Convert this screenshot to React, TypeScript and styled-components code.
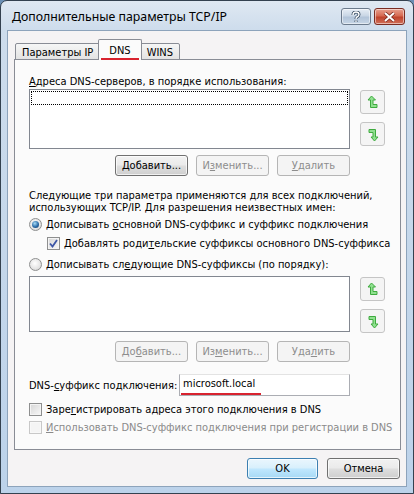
import React from 'react';
import styled, { createGlobalStyle } from 'styled-components';

const GlobalStyle = createGlobalStyle`
  * { margin: 0; padding: 0; box-sizing: border-box; }
  html, body { width: 414px; height: 494px; overflow: hidden; background: #6b8fb5; }
  body { font-family: 'DejaVu Sans Condensed', 'DejaVu Sans', sans-serif; font-size: 11px; color: #000; }
`;

const Window = styled.div`
  width: 414px;
  height: 494px;
  border: 1px solid #34414f;
  border-radius: 7px 7px 0 0;
  background: linear-gradient(180deg, #dfe8f2 0%, #cddcec 30px, #bcd2ea 100%);
  display: flex;
  flex-direction: column;
  padding: 0 6px 6px 6px;
`;

const TitleBar = styled.div`
  height: 29px;
  display: flex;
  align-items: center;
  padding: 0 2px 0 5px;
`;

const Title = styled.div`
  flex: 1;
  font-family: 'Noto Sans', 'Open Sans', sans-serif;
  font-size: 12.3px;
  color: #000;
  padding-top: 2px;
`;

const CaptionButton = styled.div<{ $close?: boolean }>`
  width: ${p => (p.$close ? 31 : 30)}px;
  height: 17px;
  margin-left: ${p => (p.$close ? 3 : 0)}px;
  margin-top: 2px;
  border: 1px solid ${p => (p.$close ? '#7a2c22' : '#6b7a8c')};
  border-radius: 3px;
  display: flex;
  align-items: center;
  justify-content: center;
  background: ${p =>
    p.$close
      ? 'linear-gradient(180deg, #e8a08f 0%, #d66a52 45%, #c0432c 55%, #d0705a 100%)'
      : 'linear-gradient(180deg, #e6edf5 0%, #c9d6e5 45%, #b2c4d9 55%, #c7d6e6 100%)'};
  box-shadow: inset 0 0 0 1px rgba(255, 255, 255, 0.5);
`;

const Client = styled.div`
  flex: 1;
  background: #f5f3f4;
  border: 1px solid #8da3bb;
  display: flex;
  flex-direction: column;
  padding: 8px 5px 0 6px;
`;

const TabRow = styled.div`
  display: flex;
  align-items: flex-end;
  height: 21px;
  padding-left: 1px;
  position: relative;
  z-index: 1;
`;

const Tab = styled.div<{ $active?: boolean; $mark?: boolean }>`
  position: relative;
  height: ${p => (p.$active ? 21 : 17)}px;
  padding: 0 ${p => (p.$active ? 10 : 6)}px;
  margin: 0 ${p => (p.$active ? -2 : 0)}px;
  z-index: ${p => (p.$active ? 2 : 1)};
  border: 1px solid #898c95;
  border-bottom: ${p => (p.$active ? 'none' : '1px solid #898c95')};
  background: ${p => (p.$active ? '#fbfbfb' : 'linear-gradient(180deg, #f6f6f6, #e3e3e3)')};
  display: flex;
  align-items: center;
  padding-top: ${p => (p.$active ? 0 : 1)}px;
  border-radius: 2px 2px 0 0;

  &::after {
    content: '';
    display: ${p => (p.$mark ? 'block' : 'none')};
    position: absolute;
    left: 2px;
    right: 2px;
    bottom: 0;
    height: 2px;
    background: #d8232f;
  }
`;

const Panel = styled.div`
  height: 391px;
  margin-top: -1px;
  border: 1px solid #898c95;
  background: #fbfbfb;
  padding: 15px 14px 0 14px;
  display: flex;
  flex-direction: column;
`;

const Label = styled.div<{ $dim?: boolean }>`
  line-height: 13px;
  color: ${p => (p.$dim ? '#8a8a8a' : '#000')};
  white-space: nowrap;
`;

const ListRow = styled.div<{ $top: number }>`
  display: flex;
  gap: 10px;
  margin-top: ${p => p.$top}px;
`;

const ListBox = styled.div<{ $h: number }>`
  width: 321px;
  height: ${p => p.$h}px;
  border: 1px solid #828790;
  background: #fff;
  padding: 1px;
`;

const FocusRow = styled.div`
  height: 14px;
  border: 1px dotted #000;
`;

const ArrowCol = styled.div<{ $gap: number }>`
  display: flex;
  flex-direction: column;
  gap: ${p => p.$gap}px;
  padding-top: 1px;
`;

const ArrowButton = styled.div`
  width: 25px;
  height: 24px;
  border: 1px solid #c5c5c5;
  border-radius: 3px;
  background: #f4f4f4;
  display: flex;
  align-items: center;
  justify-content: center;
`;

const ButtonRow = styled.div<{ $top: number }>`
  width: 321px;
  display: flex;
  justify-content: flex-end;
  gap: 8px;
  margin-top: ${p => p.$top}px;
`;

const Button = styled.div<{ $disabled?: boolean; $default?: boolean; $w?: number }>`
  width: ${p => p.$w || 73}px;
  height: 21px;
  border-radius: 3px;
  display: flex;
  align-items: center;
  justify-content: center;
  color: ${p => (p.$disabled ? '#8d8d8d' : '#000')};
  border: 1px solid ${p => (p.$disabled ? '#b5b5b5' : p.$default ? '#3c7fb1' : '#707070')};
  background: ${p =>
    p.$disabled
      ? '#f4f4f4'
      : p.$default
      ? 'linear-gradient(180deg, #eaf6fd 0%, #d9f0fc 45%, #bee6fd 55%, #a7d9f5 100%)'
      : 'linear-gradient(180deg, #f2f2f2 0%, #ebebeb 45%, #dddddd 55%, #cfcfcf 100%)'};
  box-shadow: ${p => (p.$disabled ? 'none' : 'inset 0 0 0 1px rgba(255,255,255,0.7)')};
`;

const Paragraph = styled.div`
  margin-top: 14px;
  line-height: 12px;
`;

const OptionRow = styled.div<{ $top: number; $indent?: number }>`
  display: flex;
  align-items: center;
  gap: 4px;
  margin-top: ${p => p.$top}px;
  margin-left: ${p => p.$indent || 0}px;
  height: 14px;
`;

const Radio = styled.div<{ $on?: boolean }>`
  width: 13px;
  height: 13px;
  border-radius: 50%;
  border: 1px solid #8e8f8f;
  background: radial-gradient(circle at 45% 40%, #ffffff 0%, #e4e4e4 60%, #c9c9c9 100%);
  display: flex;
  align-items: center;
  justify-content: center;
  flex-shrink: 0;

  &::after {
    content: '';
    display: ${p => (p.$on ? 'block' : 'none')};
    width: 7px;
    height: 7px;
    border-radius: 50%;
    background: radial-gradient(circle at 40% 35%, #a7dcf7 0%, #2b6ca8 55%, #12355f 100%);
  }
`;

const Check = styled.div<{ $dim?: boolean }>`
  width: 13px;
  height: 13px;
  border: 1px solid ${p => (p.$dim ? '#c8c8c8' : '#8e8f8f')};
  background: ${p => (p.$dim ? '#f4f4f4' : 'linear-gradient(135deg, #d6d6d6, #f8f8f8)')};
  box-shadow: inset 0 0 0 1px ${p => (p.$dim ? '#f8f8f8' : '#f4f4f4')};
  display: flex;
  align-items: center;
  justify-content: center;
  flex-shrink: 0;
`;

const SuffixRow = styled.div`
  width: 321px;
  display: flex;
  align-items: center;
  justify-content: space-between;
  margin-top: 12px;
`;

const Input = styled.div`
  position: relative;
  width: 171px;
  height: 22px;
  border: 1px solid #abadb3;
  border-top-color: #e3e3e3;
  background: #fff;
  padding: 2px 0 0 3px;
`;

const Annotation = styled.div`
  position: absolute;
  left: 1px;
  width: 80px;
  bottom: 0;
  height: 2px;
  background: #d8232f;
`;

const Footer = styled.div`
  display: flex;
  justify-content: flex-end;
  gap: 9px;
  padding: 8px 1px 0 0;
`;

const U = styled.span`
  text-decoration: underline;
`;

const UpIcon = () => (
  <svg width="12" height="15" viewBox="0 0 12 15">
    <path d="M4.5 1 L1 5 H3.5 V12.5 H10 V9.5 H6 V5 H8.5 Z" fill="#8fe08f" stroke="#3eaa3e" strokeWidth="1" strokeLinejoin="round" />
  </svg>
);

const DownIcon = () => (
  <svg width="12" height="15" viewBox="0 0 12 15">
    <path d="M2 2.5 H8.5 V10 H11 L7.5 14 L4 10 H6 V5.5 H2 Z" fill="#8fe08f" stroke="#3eaa3e" strokeWidth="1" strokeLinejoin="round" />
  </svg>
);

const CheckMark = () => (
  <svg width="9" height="9" viewBox="0 0 9 9">
    <path d="M1 4.5 L3.5 7.5 L8 1" fill="none" stroke="#3d56a6" strokeWidth="1.8" />
  </svg>
);

const App: React.FC = () => {
  return (
    <Window>
      <GlobalStyle />
      <TitleBar>
        <Title>Дополнительные параметры TCP/IP</Title>
        <CaptionButton>
          <svg width="10" height="12" viewBox="0 0 10 12">
            <path d="M2 4 Q2 1 5 1 Q8 1 8 3.5 Q8 5 6 6 Q5 6.5 5 8 M5 9.5 V11" fill="none" stroke="#34495f" strokeWidth="3" />
            <path d="M2 4 Q2 1 5 1 Q8 1 8 3.5 Q8 5 6 6 Q5 6.5 5 8 M5 9.5 V11" fill="none" stroke="#fff" strokeWidth="1.4" />
          </svg>
        </CaptionButton>
        <CaptionButton $close>
          <svg width="13" height="10" viewBox="0 0 13 10">
            <path d="M2 1 L11 9 M11 1 L2 9" stroke="#7a2c22" strokeWidth="3.6" />
            <path d="M2 1 L11 9 M11 1 L2 9" stroke="#fff" strokeWidth="2" />
          </svg>
        </CaptionButton>
      </TitleBar>
      <Client>
        <TabRow>
          <Tab>Параметры IP</Tab>
          <Tab $active $mark>DNS</Tab>
          <Tab>WINS</Tab>
        </TabRow>
        <Panel>
          <Label><U>А</U>дреса DNS-серверов, в порядке использования:</Label>
          <ListRow $top={1}>
            <ListBox $h={60}>
              <FocusRow />
            </ListBox>
            <ArrowCol $gap={8}>
              <ArrowButton><UpIcon /></ArrowButton>
              <ArrowButton><DownIcon /></ArrowButton>
            </ArrowCol>
          </ListRow>
          <ButtonRow $top={6}>
            <Button><U>Д</U>обавить...</Button>
            <Button $disabled>И<U>з</U>менить...</Button>
            <Button $disabled><U>У</U>далить</Button>
          </ButtonRow>
          <Paragraph>
            Следующие три параметра применяются для всех подключений,<br />
            использующих TCP/IP. Для разрешения неизвестных имен:
          </Paragraph>
          <OptionRow $top={3}>
            <Radio $on />
            <Label>Дописывать <U>о</U>сновной DNS-суффикс и суффикс подключения</Label>
          </OptionRow>
          <OptionRow $top={5} $indent={18}>
            <Check><CheckMark /></Check>
            <Label>Добавлять роди<U>т</U>ельские суффиксы основного DNS-суффикса</Label>
          </OptionRow>
          <OptionRow $top={7}>
            <Radio />
            <Label>Дописывать сл<U>е</U>дующие DNS-суффиксы (по порядку):</Label>
          </OptionRow>
          <ListRow $top={5}>
            <ListBox $h={56} />
            <ArrowCol $gap={8}>
              <ArrowButton><UpIcon /></ArrowButton>
              <ArrowButton><DownIcon /></ArrowButton>
            </ArrowCol>
          </ListRow>
          <ButtonRow $top={8}>
            <Button $disabled>До<U>б</U>авить...</Button>
            <Button $disabled>Из<U>м</U>енить...</Button>
            <Button $disabled>Уда<U>л</U>ить</Button>
          </ButtonRow>
          <SuffixRow>
            <Label>DNS-<U>с</U>уффикс подключения:</Label>
            <Input>
              microsoft.local
              <Annotation />
            </Input>
          </SuffixRow>
          <OptionRow $top={6}>
            <Check />
            <Label>Заре<U>г</U>истрировать адреса этого подключения в DNS</Label>
          </OptionRow>
          <OptionRow $top={4}>
            <Check $dim />
            <Label $dim><U>И</U>спользовать DNS-суффикс подключения при регистрации в DNS</Label>
          </OptionRow>
        </Panel>
        <Footer>
          <Button $default $w={71}>OK</Button>
          <Button>Отмена</Button>
        </Footer>
      </Client>
    </Window>
  );
};

export default App;
